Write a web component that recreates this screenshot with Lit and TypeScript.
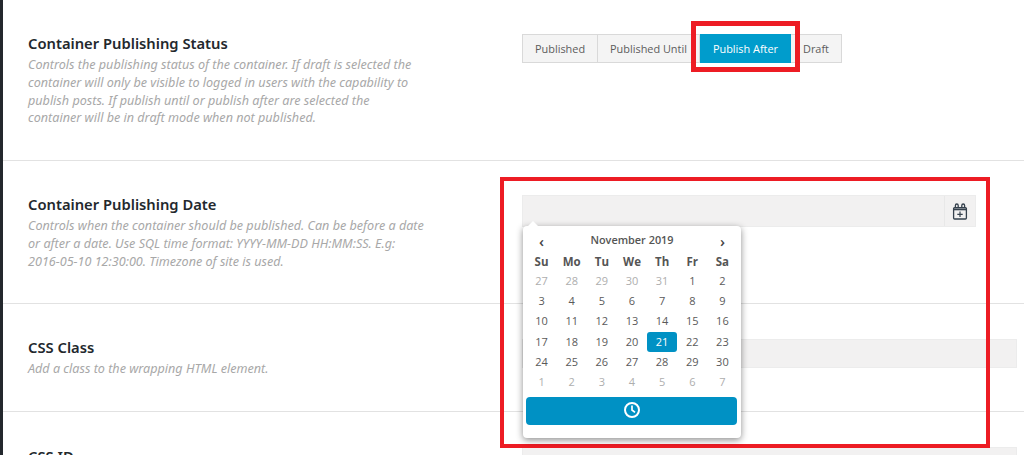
import { LitElement, html, css, svg } from "lit";
import { customElement } from "lit/decorators.js";

const weeks = [
  [27, 28, 29, 30, 31, 1, 2],
  [3, 4, 5, 6, 7, 8, 9],
  [10, 11, 12, 13, 14, 15, 16],
  [17, 18, 19, 20, 21, 22, 23],
  [24, 25, 26, 27, 28, 29, 30],
  [1, 2, 3, 4, 5, 6, 7],
];

@customElement("app-root")
export class AppRoot extends LitElement {
  static styles = css`
    :host { display: block; position: relative; width: 1024px; height: 455px; overflow: hidden; background: #fff; font-family: "Noto Sans", "Open Sans", sans-serif; }
    .page { margin-left: 3px; }
    .bar { position: absolute; left: 0; top: 0; bottom: 0; width: 3px; background: #23282d; }
    .row { display: grid; grid-template-columns: 494px 1fr; align-items: start; padding-left: 25px; border-bottom: 1px solid #e2e2e2; box-sizing: border-box; }
    .r1 { height: 161px; padding-top: 34px; }
    .r2 { height: 143px; padding-top: 34px; }
    .r3 { height: 108px; padding-top: 34px; }
    .r4 { height: 60px; padding-top: 35px; border-bottom: 0; }
    h3 { margin: 0 0 4px; font-size: 14.75px; line-height: 18px; font-weight: 600; color: #23282d; }
    p { margin: 0; width: 396px; font-size: 12.6px; line-height: 17.8px; font-style: italic; color: #a8a8a8; }
    .group { display: flex; height: 29px; width: max-content; border: 1px solid #d9d9d9; box-sizing: border-box; background: #f4f4f4; font-family: "Open Sans", sans-serif; font-size: 10.9px; color: #5c5c5c; }
    .group span { display: flex; align-items: center; padding: 0 12px; border-right: 1px solid #d9d9d9; }
    .group span:last-child { border-right: 0; }
    .group .on { background: #009ccc; color: #fff; border-right: 0; margin: -1px 0; padding: 0 13px; }
    .input { height: 32px; background: #f2f1f1; border: 1px solid #ececec; box-sizing: border-box; }
    .date { display: flex; justify-content: flex-end; width: 454px; }
    .date div { width: 30px; display: flex; align-items: center; justify-content: center; border-left: 1px solid #e8e8e8; }
    .r3 .wide { margin-top: 1px; }
    .wide { height: 29px; width: 495px; }
    .frame { position: absolute; box-sizing: border-box; border: 4px solid #ed1c24; }
    .f1 { left: 691px; top: 21px; width: 109px; height: 51px; border-width: 5px; }
    .f2 { left: 500px; top: 177px; width: 490px; height: 271px; }
    .cal { position: absolute; left: 523px; top: 226px; width: 218px; height: 212px; box-sizing: border-box; padding: 4px 4px 4px 3px; background: #fff; border-radius: 4px; box-shadow: 0 2px 7px rgba(0,0,0,.45); color: #5a5a5a; font-family: "Open Sans", sans-serif; font-size: 11px; }
    .cal::before { content: ""; position: absolute; left: 5px; top: -5px; border: 5px solid transparent; border-top: 0; border-bottom-color: #fff; }
    .grid { display: grid; grid-template-columns: repeat(7, 30.15px); grid-template-rows: 21.5px 19.4px repeat(6, 20.3px); text-align: center; line-height: 20px; margin-left: 0.5px; }
    .head { grid-column: span 5; font-weight: 600; font-size: 10.9px; color: #555; }
    .nav { font-size: 15px; font-weight: 600; color: #444; line-height: 22px; }
    .dow { font-weight: 700; font-size: 11.5px; color: #555; }
    .mute { color: #aeaeae; }
    .today { background: #0091c4; color: #fff; border-radius: 3px; }
    .clock { display: flex; align-items: center; justify-content: center; height: 28px; box-sizing: border-box; padding-bottom: 2px; margin-top: 4.3px; background: #0091c4; border-radius: 4px; }
  `;

  render() {
    return html`
      <div class="bar"></div>
      <div class="page">
        <section class="row r1">
          <div>
            <h3>Container Publishing Status</h3>
            <p>Controls the publishing status of the container. If draft is selected the container will only be visible to logged in users with the capability to publish posts. If publish until or publish after are selected the container will be in draft mode when not published.</p>
          </div>
          <div class="group"><span>Published</span><span>Published Until</span><span class="on">Publish After</span><span>Draft</span></div>
        </section>
        <section class="row r2">
          <div>
            <h3>Container Publishing Date</h3>
            <p>Controls when the container should be published. Can be before a date or after a date. Use SQL time format: YYYY-MM-DD HH:MM:SS. E.g: 2016-05-10 12:30:00. Timezone of site is used.</p>
          </div>
          <div class="input date"><div>
            <svg width="16" height="17" viewBox="0 0 16 17" fill="none" stroke="#35414d" stroke-width="1.3">
              <path d="M3.4 5V2.4a1.4 1.4 0 0 1 2.8 0V5M9.8 5V2.4a1.4 1.4 0 0 1 2.8 0V5"></path>
              <rect x="1.6" y="4.6" width="12.8" height="11.4" rx="1"></rect>
              <path d="M1.6 6.4h12.8" stroke-width="1.8"></path>
              <path d="M8 8.6v5.4M5.3 11.3h5.4" stroke-width="1.2"></path>
            </svg>
          </div></div>
        </section>
        <section class="row r3">
          <div>
            <h3>CSS Class</h3>
            <p>Add a class to the wrapping HTML element.</p>
          </div>
          <div class="input wide"></div>
        </section>
        <section class="row r4">
          <div><h3>CSS ID</h3></div>
          <div class="input wide"></div>
        </section>
      </div>
      <div class="frame f1"></div>
      <div class="frame f2"></div>
      <div class="cal">
        <div class="grid">
          <div class="nav">‹</div><div class="head">November 2019</div><div class="nav">›</div>
          ${["Su", "Mo", "Tu", "We", "Th", "Fr", "Sa"].map((d) => html`<div class="dow">${d}</div>`)}
          ${weeks.map((w, i) =>
            w.map((d) => {
              const mute = (i === 0 && d > 20) || i === 5;
              const today = i === 3 && d === 21;
              return html`<div class="${mute ? "mute" : today ? "today" : ""}">${d}</div>`;
            })
          )}
        </div>
        <div class="clock">
          <svg width="18" height="18" viewBox="0 0 18 18" fill="none" stroke="#fff" stroke-width="2">
            ${svg`<circle cx="9" cy="9" r="7"></circle><path d="M9 4.6V9l3 2.4" stroke-width="1.7"></path>`}
          </svg>
        </div>
      </div>
    `;
  }
}
